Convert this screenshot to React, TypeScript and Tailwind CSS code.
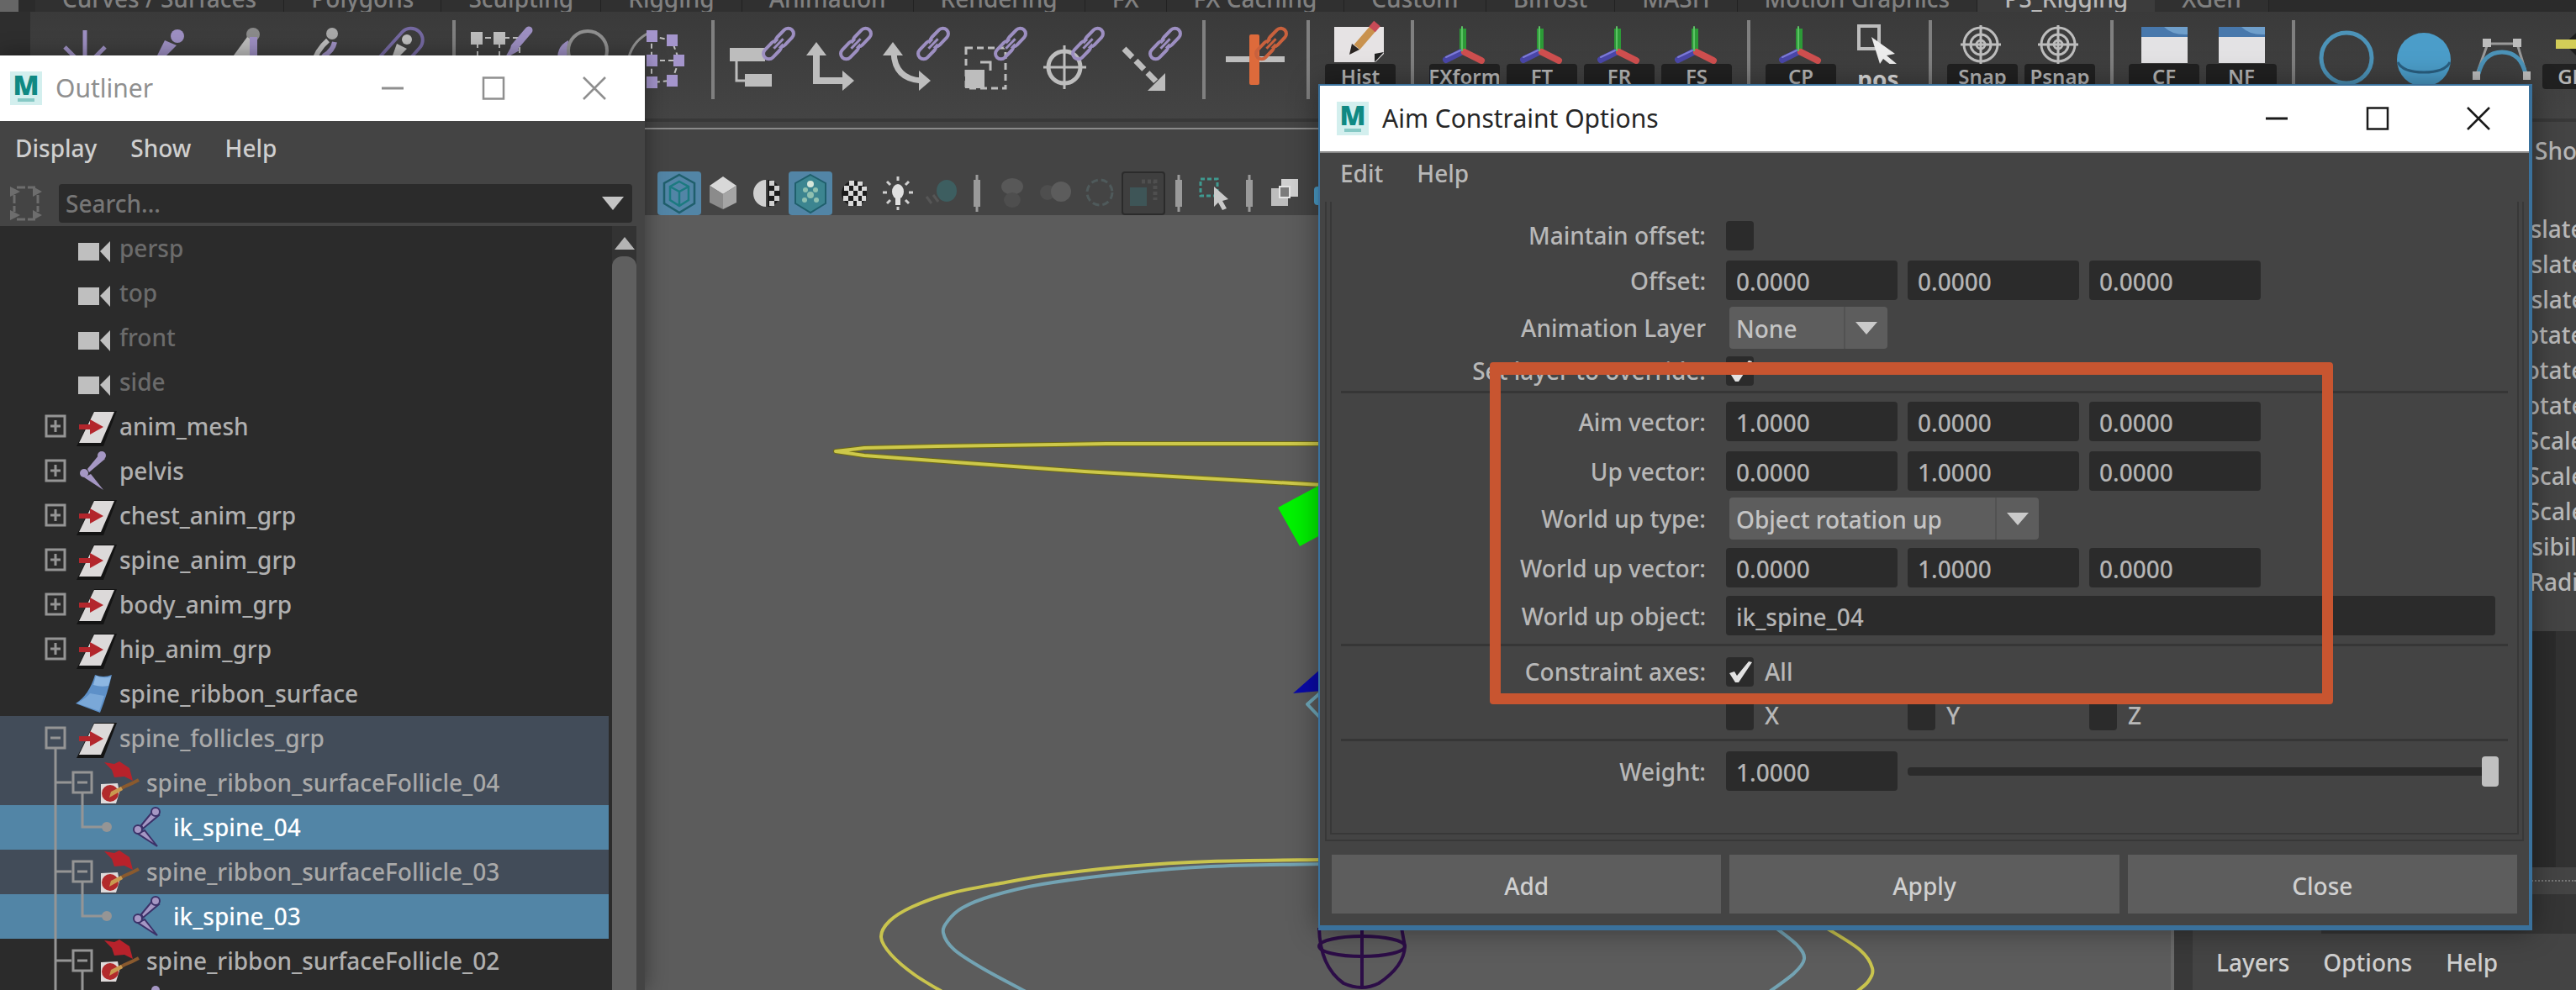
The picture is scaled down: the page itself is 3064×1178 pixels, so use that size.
import React from "react";

const FONT = "font-['Noto_Sans','Open_Sans',sans-serif] font-medium";

/* ---------- shared window chrome ---------- */

function MayaLogo() {
  return (
    <span className="flex h-10 w-[38px] shrink-0 flex-col items-center bg-[#d3efee]">
      <span className="text-[32px] leading-8 font-black text-[#0f8983]">M</span>
      <span className="h-1 w-5 bg-[#86c9c5]" />
    </span>
  );
}

function WindowTitle({ title, tone }: { title: string; tone: "active" | "idle" }) {
  const active = tone === "active";
  const stroke = active ? "#1a1a1a" : "#8f8f8f";
  return (
    <header className={active ? "flex h-20 items-center border-b-2 border-[#8a8a8a] bg-white pl-5" : "flex h-[78px] shrink-0 items-center bg-white pl-3"}>
      <MayaLogo />
      <h2 className={active ? "ml-4 flex-1 text-[30px] leading-9 font-normal text-[#262626]" : "ml-4 flex-1 text-[30px] leading-9 font-normal text-[#8f8f8f]"}>{title}</h2>
      <button aria-label="Minimize" className="flex h-full w-[120px] items-center justify-center">
        <svg width="28" height="28" viewBox="0 0 28 28"><path d="M1 14H27" stroke={stroke} strokeWidth="3" /></svg>
      </button>
      <button aria-label="Maximize" className="flex h-full w-[120px] items-center justify-center">
        <svg width="28" height="28" viewBox="0 0 28 28"><rect x="2" y="1.5" width="24" height="25" fill="none" stroke={stroke} strokeWidth="2.5" /></svg>
      </button>
      <button aria-label="Close window" className="flex h-full w-[120px] items-center justify-center">
        <svg width="28" height="28" viewBox="0 0 28 28"><path d="M1 1L27 27M27 1L1 27" stroke={stroke} strokeWidth="2.5" /></svg>
      </button>
    </header>
  );
}

/* ---------- shelf ---------- */

const TABS = ["Curves / Surfaces", "Polygons", "Sculpting", "Rigging", "Animation", "Rendering", "FX", "FX Caching", "Custom", "Bifrost", "MASH", "Motion Graphics", "PS_Rigging", "XGen"];

const G = "#bdbdbd";
const P = "#9d8fc2";

function Chain({ color = P, x = 62 }: { color?: string; x?: number }) {
  return (
    <g transform={`translate(${x} 38) rotate(-46)`} fill="none" stroke={color} strokeWidth="4">
      <rect x="-23" y="-6.500" width="25" height="13" rx="6.500" />
      <rect x="-2" y="-6.500" width="25" height="13" rx="6.500" />
      <path d="M-9 0H9" stroke="#3e3e3e" strokeWidth="6" />
      <path d="M-8 0H8" strokeWidth="3" />
    </g>
  );
}

const axis = (
  <g strokeLinecap="round" strokeWidth="8">
    <path d="M44 46V20" stroke="#2c9a37" strokeLinecap="butt" />
    <path d="M42 48L24 57" stroke="#4a47a8" />
    <path d="M46 48L66 58" stroke="#cf4f4f" />
    <path d="M43 46V18" stroke="#5cc264" strokeWidth="2" />
    <path d="M41 46L24 54" stroke="#7d7bd8" strokeWidth="2" />
  </g>
);

const target = (
  <g fill="none" stroke={G} strokeWidth="3">
    <circle cx="44" cy="39" r="20" /><circle cx="44" cy="39" r="12" /><circle cx="44" cy="39" r="5" />
    <path d="M44 16V62M20 39H68" />
  </g>
);

const panelIcon = (
  <g>
    <rect x="19" y="18" width="55" height="43" fill="#e3e2e4" />
    <rect x="19" y="18" width="55" height="12" fill="#4878ac" />
    <path d="M46 18H74V27Q56 28 46 18Z" fill="#6f9fcb" />
  </g>
);

type ShelfItem = { name: string; art?: React.ReactNode; label?: string; plain?: boolean };

const SHELF: ShelfItem[] = [
  { name: "Move down", art: <path d="M37 22V72M13 42L37 66L61 42" fill="none" stroke={P} strokeWidth="5" /> },
  { name: "Joint", art: <g fill={P}><circle cx="55" cy="29" r="8" /><path d="M40 34L54 40L28 66L30 54Z" /></g> },
  { name: "IK handle", art: <g><circle cx="53" cy="27" r="8" fill="#8a8a8a" /><path d="M46 30L52 34V60H24Z" fill={G} /><rect x="49" y="30" width="9" height="50" fill={P} /></g> },
  { name: "Spline IK", art: <g><circle cx="55" cy="26" r="7" fill="#a8a8a8" /><path d="M50 34Q36 46 32 64" fill="none" stroke={G} strokeWidth="6" /><path d="M58 36Q56 46 46 52Q40 58 40 66" fill="none" stroke={P} strokeWidth="6" /></g> },
  { name: "Bind skin", art: <g><rect x="-14" y="-36" width="28" height="80" rx="14" transform="translate(42 50) rotate(42)" fill="none" stroke="#7468a0" strokeWidth="4" /><circle cx="52" cy="33" r="6" fill={G} /><path d="M40 38L52 44L30 66Z" fill={G} /></g> },
  { name: "sep" },
  { name: "Paint weights", art: <g><path d="M10 31H64M12 36V70M38 36V70M62 42V70" stroke={G} strokeWidth="2" strokeDasharray="7 4" /><rect x="4" y="24" width="14" height="15" fill={G} /><rect x="31" y="24" width="14" height="15" fill={G} /><path d="M73 22L56 42" stroke={P} strokeWidth="9" strokeLinecap="round" /><path d="M54 38L62 46L44 56Z" fill={P} /></g> },
  { name: "Blend shape", art: <g><path d="M28 34Q12 42 16 62H26Z" fill={P} /><circle cx="51" cy="46" r="23" fill="none" stroke="#8f8f8f" strokeWidth="4" /></g> },
  { name: "Lattice", art: <g><path d="M30 26Q8 38 6 66" fill="none" stroke="#8f8f8f" strokeWidth="3" /><path d="M35 29L59 34L68 58L59 82L35 84V29M35 58H68" fill="none" stroke={G} strokeWidth="2" strokeDasharray="6 4" /><g fill="#a495cc"><rect x="29" y="22" width="13" height="14" /><rect x="29" y="51" width="13" height="14" /><rect x="29" y="77" width="13" height="14" /><rect x="53" y="27" width="13" height="14" /><rect x="61" y="51" width="13" height="14" /><rect x="53" y="75" width="13" height="14" /></g></g> },
  { name: "sep" },
  { name: "Parent constraint", art: <g><path d="M12 58V82H24" fill="none" stroke={G} strokeWidth="3" /><rect x="4" y="43" width="42" height="16" fill={G} /><rect x="22" y="74" width="32" height="15" fill={G} /><Chain /></g> },
  { name: "Point constraint", art: <g fill={G}><path d="M15 46V82H50" fill="none" stroke={G} strokeWidth="8" /><path d="M15 36L27 52H3Z" /><path d="M60 82L46 94V70Z" /><Chain /></g> },
  { name: "Orient constraint", art: <g fill={G}><path d="M15 48Q16 80 48 82" fill="none" stroke={G} strokeWidth="7" /><path d="M14 36L26 52H2Z" /><path d="M59 82L45 94V70Z" /><Chain /></g> },
  { name: "Scale constraint", art: <g><rect x="9" y="43" width="47" height="48" fill="none" stroke={G} strokeWidth="3" strokeDasharray="8 5" /><rect x="8" y="69" width="23" height="22" fill={G} /><path d="M26 60H38V70" fill="none" stroke={G} strokeWidth="3" /><Chain /></g> },
  { name: "Aim constraint", art: <g><g fill="none" stroke={G}><circle cx="34" cy="66" r="19" strokeWidth="5" /><path d="M34 40V92M9 66H60" strokeWidth="3" /></g><Chain /></g> },
  { name: "Pole vector constraint", art: <g><path d="M13 44L54 86" stroke={G} strokeWidth="7" strokeDasharray="14 6" /><path d="M62 73V94H41Z" fill={G} /><Chain /></g> },
  { name: "sep" },
  { name: "Remove constraint", art: <g><rect x="10" y="53" width="70" height="7" fill={G} /><rect x="38" y="27" width="12" height="60" rx="2" fill="#dd6a3b" /><Chain color="#c9613d" x={64} /></g> },
  { name: "sep" },
  { name: "Delete history", label: "Hist", art: <g><path d="M15 18H74V50L64 60H15Z" fill="#e6e3e4" /><path d="M74 48L63 50V60Z" fill="#222" /><path d="M61 20L42 42" stroke="#c9924e" strokeWidth="9" /><path d="M66 14L60 21" stroke="#c84b57" strokeWidth="10" /><path d="M36 38L45 45L33 51Z" fill="#2b2522" /></g> },
  { name: "sep" },
  { name: "Freeze transform", label: "FXform", art: axis },
  { name: "Freeze translate", label: "FT", art: axis },
  { name: "Freeze rotate", label: "FR", art: axis },
  { name: "Freeze scale", label: "FS", art: axis },
  { name: "sep" },
  { name: "Center pivot", label: "CP", art: axis },
  { name: "Position", label: "pos", plain: true, art: <g><rect x="23" y="17" width="24" height="27" fill="none" stroke={G} strokeWidth="4" /><path d="M38 30L66 50L56 52L68 62L62 64L52 56L48 62Z" fill="#ececec" /></g> },
  { name: "sep" },
  { name: "Snap", label: "Snap", art: target },
  { name: "Point snap", label: "Psnap", art: target },
  { name: "sep" },
  { name: "Create frame", label: "CF", art: panelIcon },
  { name: "New frame", label: "NF", art: panelIcon },
  { name: "sep" },
  { name: "NURBS circle", art: <circle cx="47" cy="55" r="30" fill="none" stroke="#4c93b8" strokeWidth="5" /> },
  { name: "NURBS sphere", art: <g><circle cx="47" cy="57" r="32" fill="#4b9dc9" /><path d="M16 60Q22 72 47 72Q72 72 78 60" fill="none" stroke="#2a5f80" strokeWidth="3" /></g> },
  { name: "Bezier curve", art: <g><path d="M18 74L31 38H66L77 74" fill="none" stroke="#9a9a9a" strokeWidth="3" /><path d="M20 74Q26 48 48 48Q70 48 76 74" fill="none" stroke="#4c93b8" strokeWidth="5" /><g fill={G}><rect x="25" y="32" width="10" height="10" /><rect x="61" y="32" width="10" height="10" /><rect x="13" y="71" width="9" height="10" /><rect x="73" y="71" width="9" height="10" /></g></g> },
  { name: "Group", label: "GRP", art: <g><path d="M30 38L52 18V60Z" fill="#1d1d1d" /><rect x="20" y="33" width="60" height="11" fill="#d3cd58" /></g> },
];

function ShelfButton({ item }: { item: ShelfItem }) {
  if (item.name === "sep") {
    return <span className="flex w-8 shrink-0 justify-center pt-[10px]"><span className="h-[94px] w-1 bg-[#808080]" /></span>;
  }
  if (!item.label) {
    return (
      <button aria-label={item.name} className="w-[92px] shrink-0">
        <svg className="block" width="92" height="104" viewBox="0 0 92 104">{item.art}</svg>
      </button>
    );
  }
  return (
    <button aria-label={item.name} className="flex w-[92px] shrink-0 flex-col items-center">
      <svg className="block" width="92" height="62" viewBox="0 0 92 62">{item.art}</svg>
      <span className={item.plain ? "text-[28px] leading-9 font-bold text-[#dedede]" : "flex h-[30px] w-[84px] items-center justify-center rounded bg-[#212121] text-[24px] leading-[30px] font-semibold text-[#b4b4b4]"}>{item.label}</span>
    </button>
  );
}

/* ---------- viewport toolbar ---------- */

type ViewTool = { name: string; state?: "on" | "boxed"; art?: React.ReactNode };

const VIEW_TOOLS: ViewTool[] = [
  { name: "Wireframe", state: "on", art: <g fill="none" stroke="#1f5f6c" strokeWidth="2.500"><path d="M26 4L44 14V38L26 49L8 38V14Z" /><path d="M26 12L37 18V34L26 41L15 34V18ZM26 24L37 18M26 24L15 18M26 24V41" stroke="#1c7a80" /></g> },
  { name: "Shaded", art: <g><path d="M26 6L42 17L26 27L10 17Z" fill="#d8d8d8" /><path d="M10 17L26 27V45L10 37Z" fill="#8b8b8b" /><path d="M42 17L26 27V45L42 37Z" fill="#a5a5a5" /></g> },
  { name: "Default material", art: <g><path d="M25 10A15 16 0 0 0 25 42Z" fill="#cfcfcf" /><path d="M27 10A15 16 0 0 1 27 42Z" fill="#1b1b1b" /><g fill="#cfcfcf"><rect x="29" y="11" width="6" height="6" /><rect x="35" y="17" width="6" height="6" /><rect x="29" y="23" width="6" height="6" /><rect x="35" y="29" width="6" height="6" /><rect x="29" y="35" width="6" height="6" /></g></g> },
  { name: "Textured wireframe", state: "on", art: <g><path d="M26 4L44 14V38L26 49L8 38V14Z" fill="#3c8590" stroke="#1f5f6c" strokeWidth="2" /><g fill="#8fc0b0"><circle cx="26" cy="15" r="4" fill="#d6e6da" /><circle cx="20" cy="22" r="3" /><circle cx="32" cy="22" r="3" /><circle cx="26" cy="28" r="4" /><circle cx="19" cy="34" r="3" /><circle cx="33" cy="34" r="3" /></g></g> },
  { name: "Textured", art: <g><circle cx="26" cy="26" r="15" fill="#1b1b1b" /><g fill="#d9d9d9"><rect x="20" y="11" width="6" height="6" /><rect x="30" y="12" width="6" height="5" /><rect x="14" y="17" width="6" height="6" /><rect x="25" y="17" width="6" height="6" /><rect x="35" y="18" width="6" height="5" /><rect x="19" y="23" width="6" height="6" /><rect x="30" y="23" width="6" height="6" /><rect x="13" y="29" width="6" height="6" /><rect x="25" y="29" width="6" height="6" /><rect x="35" y="29" width="5" height="6" /><rect x="19" y="35" width="6" height="6" /><rect x="29" y="35" width="6" height="6" /></g></g> },
  { name: "Lights", art: <g stroke="#cfcfcf" strokeWidth="3"><ellipse cx="26" cy="24" rx="7" ry="9" fill="#e0e0e0" stroke="none" /><rect x="23" y="30" width="6" height="10" fill="#e0e0e0" stroke="none" /><path d="M26 6V11M26 42V46M8 25H13M39 25H44M13 12L17 16M39 12L35 16M13 38L17 34M39 38L35 34" /></g> },
  { name: "Shadows", art: <g><ellipse cx="32" cy="23" rx="12" ry="13" fill="#3d5e60" /><path d="M8 30L14 38M16 28L22 36" stroke="#565656" strokeWidth="3" /></g> },
  { name: "sep" },
  { name: "Occlusion", art: <g fill="#585858"><ellipse cx="26" cy="18" rx="13" ry="10" /><ellipse cx="26" cy="34" rx="10" ry="9" fill="#4e4e4e" /></g> },
  { name: "Motion blur", art: <g><circle cx="16" cy="25" r="9" fill="#4e4e4e" /><circle cx="32" cy="24" r="12" fill="#5c5c5c" /></g> },
  { name: "Anti-aliasing", art: <circle cx="26" cy="25" r="15" fill="none" stroke="#4f5a5b" strokeWidth="3" strokeDasharray="8 4" /> },
  { name: "Depth of field", state: "boxed", art: <g><rect x="10" y="19" width="20" height="22" fill="#3e5557" /><path d="M24 12H40V34" fill="none" stroke="#4f4f4f" strokeWidth="5" strokeDasharray="4 3" /></g> },
  { name: "sep" },
  { name: "Isolate select", art: <g><rect x="10" y="9" width="20" height="20" fill="none" stroke="#3f9a90" strokeWidth="3" strokeDasharray="5 3" /><path d="M26 18L43 33L36 35L41 44L36 46L31 37L26 42Z" fill="#c9c9c9" /></g> },
  { name: "sep" },
  { name: "Xray", art: <g><rect x="22" y="9" width="20" height="21" fill="#d0d0d0" /><rect x="10" y="20" width="20" height="21" fill="#bdbdbd" /><rect x="20" y="18" width="12" height="13" fill="#7c7c7c" stroke="#e4e4e4" strokeWidth="2" /></g> },
  { name: "Xray joints", art: <rect x="9" y="18" width="34" height="22" rx="4" fill="#4b9dc9" /> },
];

function ViewToolButton({ tool }: { tool: ViewTool }) {
  if (tool.name === "sep") {
    return (
      <svg className="shrink-0" width="32" height="52" viewBox="0 0 32 52" aria-hidden="true">
        <path d="M16 4V48" stroke="#9a9a9a" strokeWidth="3" /><path d="M16 10V42" stroke="#9a9a9a" strokeWidth="8" />
      </svg>
    );
  }
  const look =
    tool.state === "on" ? "bg-[#5285a6]" : tool.state === "boxed" ? "bg-[#3f3f3f] border-2 border-[#2b2b2b]" : "";
  return (
    <button aria-label={tool.name} className={`flex h-[52px] w-[52px] shrink-0 items-center justify-center overflow-hidden rounded ${look}`}>
      <svg className="shrink-0" width="52" height="52" viewBox="0 0 52 52">{tool.art}</svg>
    </button>
  );
}

/** Catmull-Rom spline through the points, as an SVG path. */
function smooth(pts: number[][]) {
  let d = `M${pts[0][0]} ${pts[0][1]}`;
  for (let i = 0; i < pts.length - 1; i++) {
    const p0 = pts[i - 1] ?? pts[i];
    const p1 = pts[i];
    const p2 = pts[i + 1];
    const p3 = pts[i + 2] ?? p2;
    d += `C${p1[0] + (p2[0] - p0[0]) / 6} ${p1[1] + (p2[1] - p0[1]) / 6} ${p2[0] - (p3[0] - p1[0]) / 6} ${p2[1] - (p3[1] - p1[1]) / 6} ${p2[0]} ${p2[1]}`;
  }
  return d;
}

const YELLOW_RING = smooth([[1572, 1023], [1440, 1025], [1340, 1031], [1250, 1041], [1190, 1051], [1130, 1063], [1085, 1079], [1058, 1096], [1048, 1115], [1060, 1136], [1088, 1160], [1124, 1182]]);
const YELLOW_RING_RIGHT = smooth([[2172, 1104], [2212, 1130], [2227, 1152], [2222, 1168], [2206, 1182]]);
const BLUE_RING = smooth([[1572, 1028], [1440, 1031], [1340, 1039], [1240, 1052], [1180, 1066], [1145, 1080], [1128, 1095], [1122, 1110], [1135, 1130], [1170, 1153], [1224, 1182]]);
const BLUE_RING_RIGHT = smooth([[2112, 1104], [2138, 1125], [2146, 1141], [2134, 1158], [2102, 1182]]);

function ViewportScene() {
  return (
    <svg className="block min-h-0 w-full flex-1" viewBox="0 256 2582 922" preserveAspectRatio="xMinYMin slice" aria-label="Perspective view">
      <g fill="none" strokeLinejoin="round">
        <path d="M1572 528H1316L1115 531L1028 533L994 537L1028 542L1150 551L1290 561L1430 569L1572 577" stroke="#6d6a15" strokeWidth="6" />
        <path d="M1572 528H1316L1115 531L1028 533L994 537L1028 542L1150 551L1290 561L1430 569L1572 577" stroke="#cdc84a" strokeWidth="4" />
        <g stroke="#c9c44e" strokeWidth="4"><path d={YELLOW_RING} /><path d={YELLOW_RING_RIGHT} /></g>
        <g stroke="#73a3b3" strokeWidth="4"><path d={BLUE_RING} /><path d={BLUE_RING_RIGHT} /></g>
        <path d="M1572 823L1555 838L1572 856" stroke="#6fa9bb" strokeWidth="4" />
        <g stroke="#2c0d47" strokeWidth="4">
          <ellipse cx="1620" cy="1126" rx="51" ry="12" />
          <path d="M1569 1104Q1570 1150 1598 1170Q1620 1180 1640 1170Q1670 1150 1671 1126L1667 1104M1620 1104V1175" />
        </g>
      </g>
      <path d="M1520 604L1572 576V636L1546 650Z" fill="#00f200" />
      <path d="M1538 825L1572 795V822Z" fill="#0a0aa8" />
    </svg>
  );
}

/* ---------- channel box ---------- */

const CHANNELS = ["Translate X", "Translate Y", "Translate Z", "Rotate X", "Rotate Y", "Rotate Z", "Scale X", "Scale Y", "Scale Z", "Visibility", "Radius"];

function ChannelBox() {
  return (
    <aside className="flex w-[482px] shrink-0 flex-col overflow-hidden border-l-4 border-[#6a6a6a] bg-[#444] text-[28px] text-[#b8b8b8]">
      <div className="flex h-full flex-col border-l-[22px] border-[#393939]">
        <p className="pt-[14px] pl-[407px] leading-10">Show</p>
        <ul className="mt-[52px] w-[490px] text-right">
          {CHANNELS.map((c) => <li key={c} className="leading-[42px]">{c}</li>)}
        </ul>
        <div className="mt-[38px] flex h-[281px] justify-end bg-[#2b2b2b]"><span className="w-6 bg-[#323232]" /></div>
        <div className="flex h-8 items-center justify-end"><span className="w-[60px] border-t-2 border-dotted border-[#777]" /></div>
        <div className="flex h-[47px] items-end bg-[#353535]" role="tablist">
          <button role="tab" aria-selected="true" className="h-full bg-[#444] px-7 leading-[48px] text-[#cfcfcf]">Display</button>
          <button role="tab" aria-selected="false" className="h-full px-8 leading-[48px] text-[#8f8f8f]">Anim</button>
        </div>
        <nav className="flex gap-10 pt-[14px] pl-7 leading-10 text-[#cfcfcf]">
          <button>Layers</button><button>Options</button><button>Help</button>
        </nav>
      </div>
    </aside>
  );
}

/* ---------- outliner ---------- */

type Kind = "camera" | "group" | "joint" | "surface" | "follicle";
type Node = { name: string; kind: Kind; level: 0 | 1 | 2; toggle?: "+" | "-"; tone?: "dim" | "parent" | "selected" };

const NODES: Node[] = [
  { name: "persp", kind: "camera", level: 0, tone: "dim" },
  { name: "top", kind: "camera", level: 0, tone: "dim" },
  { name: "front", kind: "camera", level: 0, tone: "dim" },
  { name: "side", kind: "camera", level: 0, tone: "dim" },
  { name: "anim_mesh", kind: "group", level: 0, toggle: "+" },
  { name: "pelvis", kind: "joint", level: 0, toggle: "+" },
  { name: "chest_anim_grp", kind: "group", level: 0, toggle: "+" },
  { name: "spine_anim_grp", kind: "group", level: 0, toggle: "+" },
  { name: "body_anim_grp", kind: "group", level: 0, toggle: "+" },
  { name: "hip_anim_grp", kind: "group", level: 0, toggle: "+" },
  { name: "spine_ribbon_surface", kind: "surface", level: 0 },
  { name: "spine_follicles_grp", kind: "group", level: 0, toggle: "-", tone: "parent" },
  { name: "spine_ribbon_surfaceFollicle_04", kind: "follicle", level: 1, toggle: "-", tone: "parent" },
  { name: "ik_spine_04", kind: "joint", level: 2, tone: "selected" },
  { name: "spine_ribbon_surfaceFollicle_03", kind: "follicle", level: 1, toggle: "-", tone: "parent" },
  { name: "ik_spine_03", kind: "joint", level: 2, tone: "selected" },
  { name: "spine_ribbon_surfaceFollicle_02", kind: "follicle", level: 1, toggle: "-" },
  { name: "ik_spine_02", kind: "joint", level: 2 },
];

function NodeIcon({ kind, selected }: { kind: Kind; selected: boolean }) {
  const outline = selected ? "#3b3168" : "none";
  return (
    <svg className="shrink-0 overflow-visible" width="50" height="53" viewBox="0 0 50 53" aria-hidden="true">
      {kind === "camera" && <g fill="#bfbfbf"><rect x="1" y="20" width="25" height="21" /><path d="M27 30L39 18V43Z" /></g>}
      {kind === "group" && (
        <g><path d="M20 8H47L31 50H-1Z" fill="#141414" /><path d="M20 9H44L28 46H2Z" fill="#dcd9d9" /><path d="M2 24H15V18L31 27L15 36V30H2Z" fill="#b3262c" /></g>
      )}
      {kind === "joint" && (
        <g fill="#a597c4" stroke={outline} strokeWidth="2">
          <path d="M26 7L33 12L14 28L12 24Z" /><path d="M8 34L16 30L31 49Z" /><circle cx="29" cy="8" r="5" /><circle cx="8" cy="29" r="5" />
        </g>
      )}
      {kind === "surface" && (
        <g><path d="M21 4Q31 8 41 4Q36 26 27 49L-2 38Q14 28 21 4Z" fill="#5d90c8" /><path d="M22 5Q31 9 40 6L37 17Q28 19 19 16Z" fill="#8db7e2" /><path d="M0 38Q12 30 15 26L32 29L26 47Z" fill="#7aa8d8" /></g>
      )}
      {kind === "follicle" && (
        <g><path d="M-4 28L16 27L18 38L14 51H-4Z" fill="#dfdada" /><circle cx="7" cy="39" r="10" fill="#b22a2c" /><path d="M8 40L24 31Q34 27 41 23" fill="none" stroke="#8a5a2e" strokeWidth="4" /><path d="M6 44L8 37L20 31L22 35Z" fill="#c99a50" /><path d="M0 2L12 4L18 1L30 9L34 24L24 19L12 20L9 11Z" fill="#b8222b" /></g>
      )}
    </svg>
  );
}

function Gutter({ node }: { node: Node }) {
  const x = 53 + node.level * 32;
  const w = 92 + node.level * 32;
  const nested = node.level > 0;
  return (
    <svg className="shrink-0" width={w} height="53" viewBox={`0 0 ${w} 53`} aria-hidden="true">
      <g fill="none" stroke="#959595" strokeWidth="3">
        {nested && <path d="M66 0V53" />}
        {node.level === 1 && <path d="M66 26H85M98 39V53" />}
        {node.level === 2 && <path d="M98 0V26H124" />}
        {node.toggle && <rect x={x + 2} y="14" width="22" height="24" />}
        {node.toggle && <path d={`M${x + 7} 26H${x + 19}`} />}
        {node.toggle === "+" && <path d={`M${x + 13} 19V33`} />}
        {node.toggle === "-" && !nested && <path d="M66 39V53" />}
      </g>
      {node.level === 2 && <circle cx="127" cy="26" r="6" fill="#959595" />}
    </svg>
  );
}

const ROW_TONE = {
  dim: "text-[#6b6b6b]",
  parent: "bg-[#424c59] text-[#a9a9a9]",
  selected: "bg-[#5285a6] text-white",
  normal: "text-[#b0b0b0]",
};

function Outliner() {
  return (
    <section className="absolute top-[66px] bottom-0 left-0 flex w-[767px] flex-col overflow-hidden bg-[#444] shadow-[0_0_24px_rgba(0,0,0,0.4)]">
      <WindowTitle title="Outliner" tone="idle" />
      <nav className="flex gap-10 pt-3 pl-[18px] text-[28px] leading-10 text-[#cfcfcf]">
        <button>Display</button><button>Show</button><button>Help</button>
      </nav>
      <div className="mt-[23px] flex items-center gap-5 pr-[15px] pl-3">
        <svg className="shrink-0" width="38" height="44" viewBox="0 0 38 44" aria-hidden="true">
          <path d="M8 3H30M8 41H30M5 12V32M33 12V32" stroke="#6d6d6d" strokeWidth="3" strokeDasharray="10 3" />
          <path d="M0 2L12 8L0 14ZM38 8L27 2V14ZM0 30L12 36L0 42ZM38 36L27 30V42Z" fill="#6d6d6d" />
        </svg>
        <label className="flex h-[46px] flex-1 items-center rounded bg-[#2b2b2b] pr-[10px] pl-2">
          <input aria-label="Search" placeholder="Search..." className="min-w-0 flex-1 bg-transparent text-[28px] leading-9 outline-none placeholder:text-[#767676]" />
          <svg width="26" height="16" viewBox="0 0 26 16" aria-hidden="true"><path d="M0 0H26L13 16Z" fill="#c4c4c4" /></svg>
        </label>
      </div>
      <div className="mt-1 flex min-h-0 flex-1 pr-[10px]">
        <ul className="min-w-0 flex-1 overflow-hidden bg-[#2b2b2b] pr-1">
          {NODES.map((n) => (
            <li key={n.name} className={`flex h-[53px] items-center text-[28px] leading-[53px] ${ROW_TONE[n.tone ?? "normal"]}`}>
              <Gutter node={n} />
              <NodeIcon kind={n.kind} selected={n.tone === "selected"} />
              <span className="whitespace-nowrap">{n.name}</span>
            </li>
          ))}
        </ul>
        <div className="flex w-[29px] flex-col items-center bg-[#333]">
          <button aria-label="Scroll up" className="flex h-9 items-center justify-center pt-1">
            <svg width="24" height="15" viewBox="0 0 24 15"><path d="M12 0L24 15H0Z" fill="#b4b4b4" /></svg>
          </button>
          <div className="w-full flex-1 rounded-t-xl bg-[#5f5f5f]" />
        </div>
      </div>
    </section>
  );
}

/* ---------- aim constraint dialog ---------- */

function Row({ label, htmlFor, className = "", children }: { label?: string; htmlFor?: string; className?: string; children: React.ReactNode }) {
  return (
    <div className={`flex items-center ${className}`}>
      <label htmlFor={htmlFor} className="w-[445px] shrink-0 text-right leading-9 whitespace-nowrap">{label}</label>
      <div className="ml-6 flex flex-1 items-center gap-3">{children}</div>
    </div>
  );
}

const FIELD = "h-[47px] rounded bg-[#2b2b2b] px-3 pt-[2px] text-[28px] text-[#b4b4b4] outline-none";

function Vector({ id, label, values, className }: { id: string; label: string; values: string[]; className: string }) {
  return (
    <Row label={label} htmlFor={`${id}-0`} className={className}>
      {values.map((v, i) => (
        <input key={i} id={`${id}-${i}`} aria-label={`${label} ${"XYZ"[i]}`} defaultValue={v} className={`w-[204px] ${FIELD}`} />
      ))}
    </Row>
  );
}

function Check({ id, checked, label }: { id: string; checked?: boolean; label?: string }) {
  return (
    <span className="flex w-[204px] items-center gap-[13px]">
      <span className="relative flex h-[35px] w-[33px] shrink-0">
        <input id={id} type="checkbox" defaultChecked={checked} className="peer h-full w-full appearance-none rounded bg-[#2b2b2b]" />
        <svg className="pointer-events-none absolute inset-0 hidden peer-checked:block" width="33" height="35" viewBox="0 0 33 35" aria-hidden="true">
          <path d="M4 19L10 17L13 22L27 5L31 6L15 30L11 30Z" fill="#e2e2e2" />
        </svg>
      </span>
      {label && <label htmlFor={id} className="leading-9">{label}</label>}
    </span>
  );
}

function Dropdown({ id, value, className }: { id: string; value: string; className: string }) {
  return (
    <div className={`relative ml-1 flex h-[50px] ${className}`}>
      <select id={id} className="h-full w-full appearance-none rounded bg-[#5d5d5d] pt-[2px] pl-2 text-[28px] text-[#c4c4c4] outline-none"><option>{value}</option></select>
      <span className="pointer-events-none absolute inset-y-0 right-0 flex w-[52px] items-center justify-center border-l-2 border-[#525252]">
        <svg width="26" height="15" viewBox="0 0 26 15" aria-hidden="true"><path d="M0 0H26L13 15Z" fill="#cacaca" /></svg>
      </span>
    </div>
  );
}

const Rule = ({ className }: { className: string }) => <hr className={`mx-[11px] border-t-[3px] border-[#363636] ${className}`} />;

function AimDialog() {
  return (
    <section className="absolute top-[100px] right-[52px] left-[1568px] border-2 border-r-4 border-b-[6px] border-[#3a719c] bg-[#444] pb-[14px] text-[28px] text-[#b8b8b8] shadow-[0_0_32px_rgba(0,0,0,0.4)]">
      <WindowTitle title="Aim Constraint Options" tone="active" />
      <nav className="flex gap-10 px-6 pt-1 leading-10 text-[#b8b8b8]">
        <button>Edit</button><button>Help</button>
      </nav>
      <div className="mx-[6px] mt-[14px] border-2 border-t-0 border-[#383838] px-1 pb-[6px]">
        <form className="border-2 border-t-0 border-[#383838] pt-[22px] pb-[50px]">
          <Row label="Maintain offset:" htmlFor="maintain"><Check id="maintain" /></Row>
          <Vector id="offset" label="Offset:" values={["0.0000", "0.0000", "0.0000"]} className="mt-3" />
          <Row label="Animation Layer" htmlFor="layer" className="mt-2"><Dropdown id="layer" value="None" className="w-[188px]" /></Row>
          <Row label="Set layer to override:" htmlFor="override" className="mt-2"><Check id="override" checked /></Row>
          <Rule className="mt-[6px]" />
          <Vector id="aim" label="Aim vector:" values={["1.0000", "0.0000", "0.0000"]} className="mt-[10px]" />
          <Vector id="up" label="Up vector:" values={["0.0000", "1.0000", "0.0000"]} className="mt-[12px]" />
          <Row label="World up type:" htmlFor="uptype" className="mt-2"><Dropdown id="uptype" value="Object rotation up" className="w-[368px]" /></Row>
          <Vector id="worldup" label="World up vector:" values={["0.0000", "1.0000", "0.0000"]} className="mt-[10px]" />
          <Row label="World up object:" htmlFor="upobject" className="mt-[10px] mr-[26px]">
            <input id="upobject" defaultValue="ik_spine_04" className={`min-w-0 flex-1 ${FIELD}`} />
          </Row>
          <Rule className="mt-[10px]" />
          <Row label="Constraint axes:" htmlFor="all" className="mt-3"><Check id="all" checked label="All" /></Row>
          <Row className="mt-4">
            <Check id="ax" label="X" /><Check id="ay" label="Y" /><Check id="az" label="Z" />
          </Row>
          <Rule className="mt-[10px]" />
          <Row label="Weight:" htmlFor="weight" className="mt-3 mr-[22px]">
            <input id="weight" defaultValue="1.0000" className={`w-[204px] ${FIELD}`} />
            <input
              aria-label="Weight slider"
              type="range"
              min={0}
              max={100}
              defaultValue={100}
              className="h-9 min-w-0 flex-1 appearance-none bg-transparent [&::-webkit-slider-runnable-track]:h-[10px] [&::-webkit-slider-runnable-track]:rounded [&::-webkit-slider-runnable-track]:bg-[#2b2b2b] [&::-webkit-slider-thumb]:-mt-[13px] [&::-webkit-slider-thumb]:h-9 [&::-webkit-slider-thumb]:w-5 [&::-webkit-slider-thumb]:appearance-none [&::-webkit-slider-thumb]:rounded [&::-webkit-slider-thumb]:bg-[#c0c0c0]"
            />
          </Row>
        </form>
      </div>
      <div className="mt-4 grid grid-cols-3 gap-[10px] px-[14px] text-[#d0d0d0]">
        {["Add", "Apply", "Close"].map((b) => (
          <button key={b} className="h-[70px] bg-[#5d5d5d] pt-1">{b}</button>
        ))}
      </div>
      {/* annotation frame over the vector settings */}
      <div className="pointer-events-none absolute top-[329px] left-[202px] h-[407px] w-[1003px] rounded-sm border-[13px] border-t-[15px] border-[#c85530]" />
    </section>
  );
}

export default function App() {
  return (
    <main className={`relative flex h-screen flex-col overflow-hidden bg-[#444] ${FONT}`}>
      <div className="flex h-[14px] shrink-0 items-end overflow-hidden bg-[#2b2b2b] text-[28px] leading-8" role="tablist">
        <span className="h-full w-[22px] shrink-0 bg-[#666]" />
        <span className="h-full w-5 shrink-0" />
        {TABS.map((t) => (
          <button
            key={t}
            role="tab"
            aria-selected={t === "PS_Rigging"}
            className={t === "PS_Rigging" ? "shrink-0 bg-[#3c3c3c] px-8 text-[#b8b8b8]" : "shrink-0 border-r border-[#222] bg-[#303030] px-8 text-[#808080]"}
          >
            {t}
          </button>
        ))}
      </div>
      <div className="flex h-[127px] shrink-0 overflow-hidden bg-gradient-to-b from-[#3a3a3a] to-[#444]">
        <span className="w-9 shrink-0 bg-[#2e2e2e]" />
        <div className="flex items-start pl-7">
          {SHELF.map((item, i) => <ShelfButton key={i} item={item} />)}
        </div>
      </div>
      <div className="h-1 shrink-0 bg-[#383838]" />
      <div className="flex min-h-0 flex-1">
        <section className="flex min-w-0 flex-1 flex-col bg-[#5c5c5c]">
          <div className="h-[7px] shrink-0 bg-[#444]" />
          <div className="flex h-[104px] shrink-0 items-end overflow-hidden border-t-2 border-[#8a8a8a] bg-[#444] pl-[782px]">
            {VIEW_TOOLS.map((t, i) => <ViewToolButton key={i} tool={t} />)}
          </div>
          <ViewportScene />
        </section>
        <ChannelBox />
      </div>
      <Outliner />
      <AimDialog />
    </main>
  );
}
